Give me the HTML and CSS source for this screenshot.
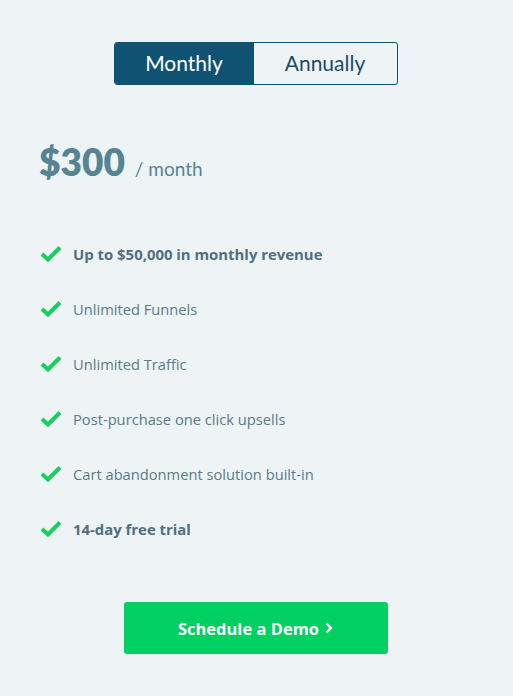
FILE: index.html
```html
<!DOCTYPE html>
<html>
<head>
<meta charset="utf-8">
<link rel="stylesheet" href="styles.css">
</head>
<body>
<div class="page">
  <div class="toggle">
    <div class="opt active">Monthly</div>
    <div class="opt">Annually</div>
  </div>
  <div class="price"><span class="amount">$300</span><span class="per">/ month</span></div>
  <ul class="features">
    <li class="bold"><svg class="check" viewBox="0 0 22 17"><path d="M2 9 L8 14.5 L20 2.5" fill="none" stroke="#17cf5c" stroke-width="4"/></svg>Up to $50,000 in monthly revenue</li>
    <li><svg class="check" viewBox="0 0 22 17"><path d="M2 9 L8 14.5 L20 2.5" fill="none" stroke="#17cf5c" stroke-width="4"/></svg>Unlimited Funnels</li>
    <li><svg class="check" viewBox="0 0 22 17"><path d="M2 9 L8 14.5 L20 2.5" fill="none" stroke="#17cf5c" stroke-width="4"/></svg>Unlimited Traffic</li>
    <li><svg class="check" viewBox="0 0 22 17"><path d="M2 9 L8 14.5 L20 2.5" fill="none" stroke="#17cf5c" stroke-width="4"/></svg>Post-purchase one click upsells</li>
    <li><svg class="check" viewBox="0 0 22 17"><path d="M2 9 L8 14.5 L20 2.5" fill="none" stroke="#17cf5c" stroke-width="4"/></svg>Cart abandonment solution built-in</li>
    <li class="bold"><svg class="check" viewBox="0 0 22 17"><path d="M2 9 L8 14.5 L20 2.5" fill="none" stroke="#17cf5c" stroke-width="4"/></svg>14-day free trial</li>
  </ul>
  <div class="cta-wrap">
    <a class="cta">Schedule a Demo <svg class="chev" viewBox="0 0 8 12"><path d="M1.5 1.5 L6 6 L1.5 10.5" fill="none" stroke="#fff" stroke-width="2.4"/></svg></a>
  </div>
</div>
</body>
</html>
```
FILE: styles.css
```css
html, body {
  margin: 0;
  padding: 0;
  background: #eef3f6;
}
body {
  font-family: Lato, "Open Sans", sans-serif;
  width: 513px;
  height: 696px;
}
.page {
  padding-top: 42px;
}
.toggle {
  display: flex;
  width: 284px;
  height: 43px;
  margin: 0 auto;
  box-sizing: border-box;
  border: 1px solid #0f5272;
  border-radius: 3px;
  overflow: hidden;
  position: relative;
  left: -1px;
}
.opt {
  display: flex;
  align-items: center;
  justify-content: center;
  font-size: 21px;
  color: #1d4b63;
  flex: 144 1 0;
  padding-bottom: 2px;
}
.opt.active {
  flex: 140 1 0;
  background: #0f5272;
  color: #ffffff;
}
.price {
  display: flex;
  align-items: baseline;
  padding: 55px 0 0 39px;
  color: #568493;
}
.amount {
  font-size: 37px;
  font-weight: 800;
  line-height: 44px;
}
.per {
  font-size: 19px;
  margin-left: 10px;
}
.features {
  list-style: none;
  margin: 0;
  padding: 42px 0 0 40px;
  font-family: "Open Sans", sans-serif;
}
.features li {
  display: flex;
  align-items: center;
  height: 55px;
  font-size: 14.7px;
  color: #5b7b88;
}
.features li.bold {
  font-weight: 700;
  font-size: 14.9px;
  color: #4f707d;
}
.check {
  width: 22px;
  height: 17px;
  margin-right: 11px;
  flex: none;
}
.cta-wrap {
  display: flex;
  justify-content: center;
  padding-top: 46px;
}
.cta {
  display: flex;
  align-items: center;
  justify-content: center;
  width: 264px;
  height: 52px;
  background: #00cf61;
  border-radius: 3px;
  color: #fff;
  font-family: "Open Sans", sans-serif;
  font-weight: 700;
  font-size: 16.5px;
  position: relative;
  left: -1px;
}
.chev {
  width: 8px;
  height: 12px;
  margin-left: 6px;
}
```
